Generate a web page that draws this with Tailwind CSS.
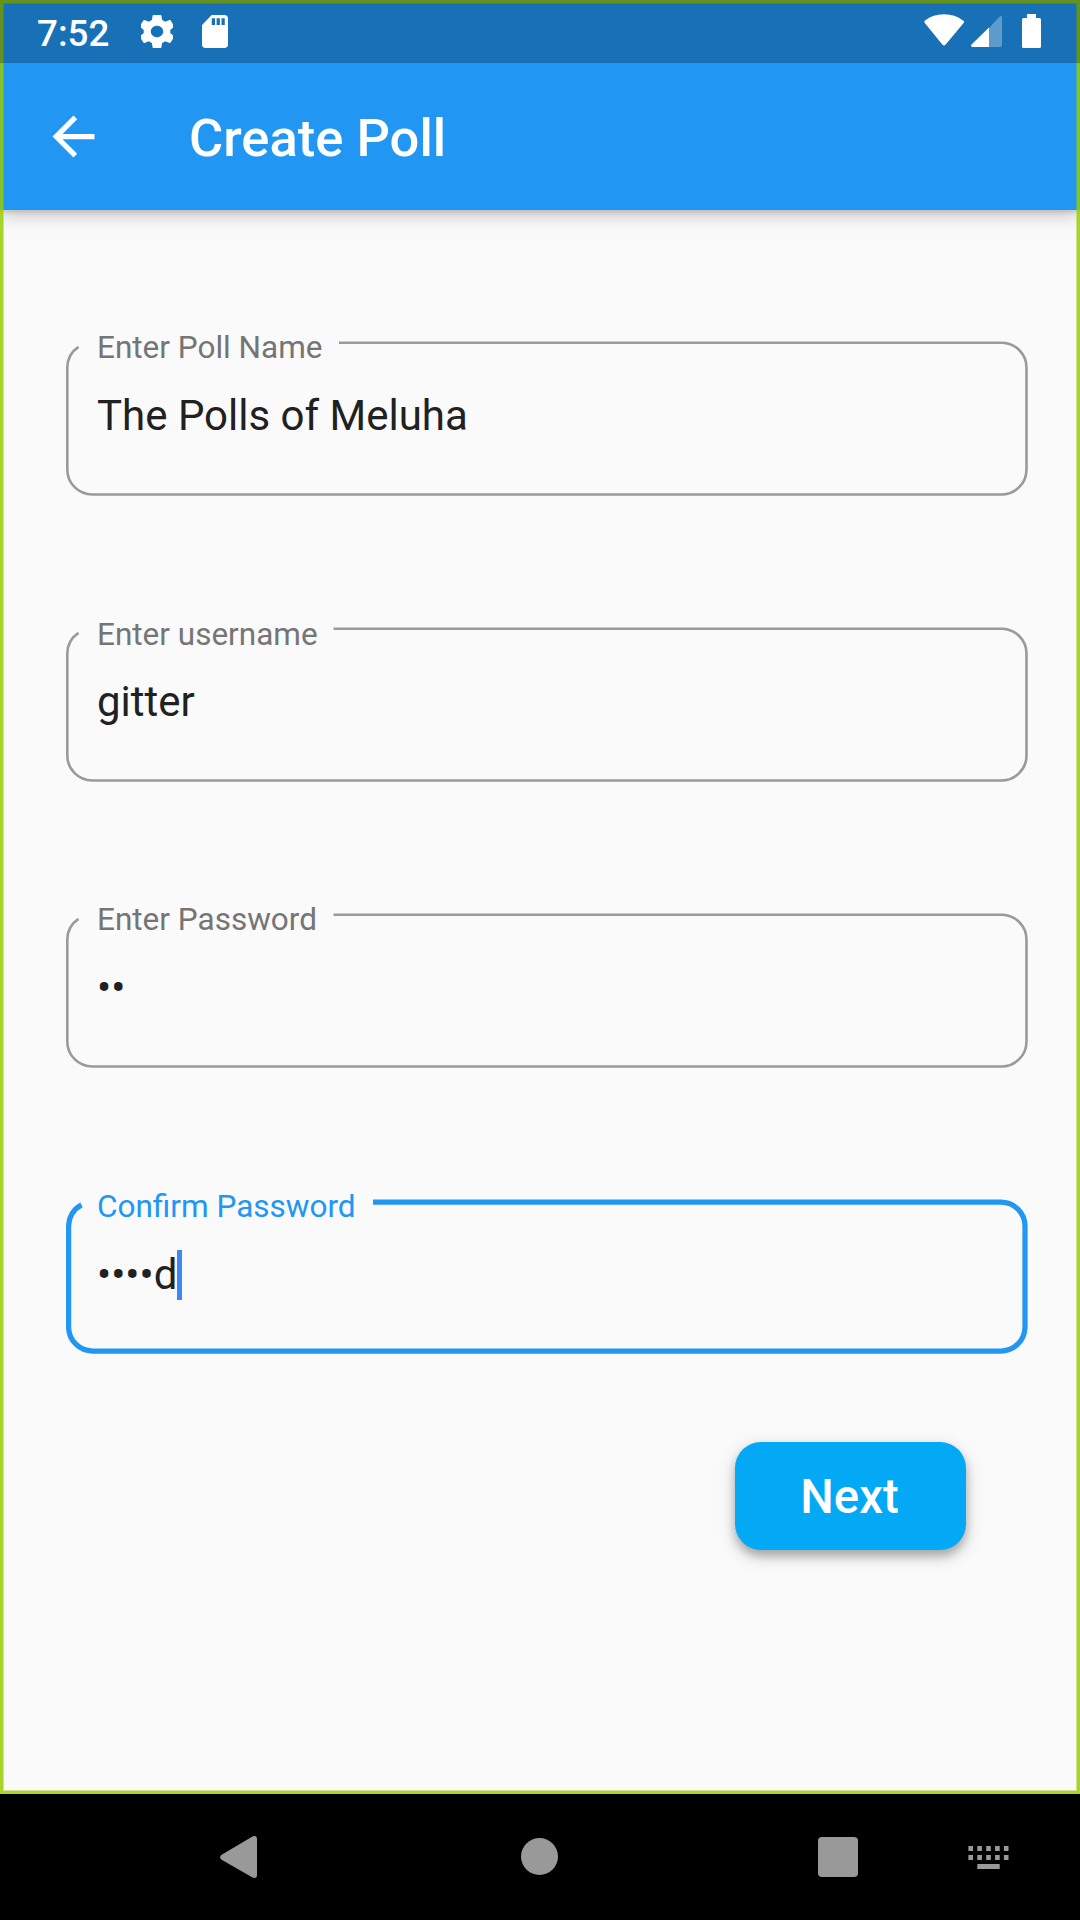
<!DOCTYPE html>
<html lang="en">
<head>
<meta charset="utf-8">
<title>Create Poll</title>
<script src="https://cdn.jsdelivr.net/npm/@tailwindcss/browser@4"></script>
</head>
<body class="bg-black font-['Roboto',sans-serif]">
<div class="flex h-[1920px] w-[1080px] flex-col overflow-hidden">
  <div class="relative flex h-[1794px] flex-col overflow-hidden bg-[#fafafa]">
    <header class="h-[210px] shrink-0 bg-[#2196f3] shadow-[0_2px_5px_rgba(0,0,0,0.12),0_4px_18px_rgba(0,0,0,0.24)]">
      <div class="relative z-20 flex h-[63px] items-center bg-black/25 pr-[39px] pl-[37px] text-white">
        <span class="mt-[5px] w-[104px] text-[36.75px] leading-none font-medium">7:52</span>
        <svg class="h-[33px] w-[32px] shrink-0" viewBox="3 2 18 20" preserveAspectRatio="none" fill="currentColor"><path d="M19.43 12.98c.04-.32.07-.64.07-.98s-.03-.66-.07-.98l2.11-1.65c.19-.15.24-.42.12-.64l-2-3.46c-.12-.22-.39-.3-.61-.22l-2.49 1c-.52-.4-1.08-.73-1.69-.98l-.38-2.65C14.46 2.18 14.25 2 14 2h-4c-.25 0-.46.18-.49.42l-.38 2.65c-.61.25-1.17.59-1.69.98l-2.49-1c-.23-.09-.49 0-.61.22l-2 3.46c-.13.22-.07.49.12.64l2.11 1.65c-.04.32-.07.65-.07.98s.03.66.07.98l-2.11 1.65c-.19.15-.24.42-.12.64l2 3.46c.12.22.39.3.61.22l2.49-1c.52.4 1.08.73 1.69.98l.38 2.65c.03.24.24.42.49.42h4c.25 0 .46-.18.49-.42l.38-2.65c.61-.25 1.17-.59 1.69-.98l2.49 1c.23.09.49 0 .61-.22l2-3.46c.12-.22.07-.49-.12-.64l-2.11-1.65zM12 15.5c-1.93 0-3.5-1.57-3.5-3.5s1.57-3.5 3.5-3.5 3.5 1.57 3.5 3.5-1.57 3.5-3.5 3.5z"/></svg>
        <svg class="ml-[29px] h-[33px] w-[26px] shrink-0" viewBox="4 2 16 20" preserveAspectRatio="none" fill="currentColor"><path d="M18 2h-8L4.020 8 4 20c0 1.100.9 2 2 2h12c1.100 0 2-.9 2-2V4c0-1.100-.9-2-2-2zm-6 6h-2V4h2v4zm3 0h-2V4h2v4zm3 0h-2V4h2v4z"/></svg>
        <div class="mb-px ml-auto flex items-center">
          <svg class="h-[34px] w-[40px]" viewBox="0 0 40 34" fill="currentColor"><path d="M.6 8.800Q-.2 7.400 1 6.400Q9 .2 20 .2T39 6.400Q41 7.400 39.800 8.800L21.500 30.800Q20 32.300 18.500 30.800Z"/></svg>
          <svg class="ml-[7px] h-[34px] w-[31px]" viewBox="0 0 31 34" fill="currentColor"><path fill-opacity=".3" d="M18 14 28.500 2.700Q31 1 31 3.500V31Q31 33 29 33H18Z"/><path d="M18 13.500V33H1.200Q-.3 32.500.3 30.800Z"/></svg>
          <svg class="ml-[20px] h-[34px] w-[19px]" viewBox="0 0 19 34" fill="currentColor"><path d="M5 0h9v4h3.500Q19 4 19 5.500v27Q19 34 17.500 34h-16Q0 34 0 32.500v-27Q0 4 1.500 4H5Z"/></svg>
        </div>
      </div>
      <div class="flex h-[147px] items-center pl-[42px] text-white">
        <svg class="size-[63px]" viewBox="0 0 24 24" fill="currentColor"><path d="M20 11H7.830l5.590-5.590L12 4l-8 8 8 8 1.410-1.410L7.830 13H20v-2z"/></svg>
        <h1 class="mt-[3px] ml-[84px] text-[52.5px] leading-none font-medium">Create Poll</h1>
      </div>
    </header>

    <main class="flex flex-col gap-[131px] pt-[131px] pl-[66px]">
      <label class="relative block h-[155px] w-[962px] pl-[31px]">
        <svg class="absolute inset-0 size-full" viewBox="0 0 962 155" fill="none" stroke="#9a9a9a" stroke-width="2.6"><path d="M273 1.700H935.500a25 25 0 0 1 25 25V128.500a25 25 0 0 1-25 25H26.300a25 25 0 0 1-25-25V26.700A25 25 0 0 1 12.500 5.800"/></svg>
        <span class="block h-[48px] -translate-y-[9px] text-[31.500px] leading-[32px] text-[#757575]">Enter Poll Name</span>
        <span class="block translate-y-[2px] text-[42px] leading-[50px] text-[#212121]">The Polls of Meluha</span>
      </label>
      <label class="relative block h-[155px] w-[962px] pl-[31px]">
        <svg class="absolute inset-0 size-full" viewBox="0 0 962 155" fill="none" stroke="#9a9a9a" stroke-width="2.6"><path d="M267.500 1.700H935.500a25 25 0 0 1 25 25V128.500a25 25 0 0 1-25 25H26.300a25 25 0 0 1-25-25V26.700A25 25 0 0 1 12.500 5.800"/></svg>
        <span class="block h-[48px] -translate-y-[8px] text-[31.500px] leading-[32px] text-[#757575]">Enter username</span>
        <span class="block translate-y-[2px] text-[42px] leading-[50px] text-[#212121]">gitter</span>
      </label>
      <label class="relative block h-[155px] w-[962px] pl-[31px]">
        <svg class="absolute inset-0 size-full" viewBox="0 0 962 155" fill="none" stroke="#9a9a9a" stroke-width="2.6"><path d="M267.500 1.700H935.500a25 25 0 0 1 25 25V128.500a25 25 0 0 1-25 25H26.300a25 25 0 0 1-25-25V26.700A25 25 0 0 1 12.500 5.800"/></svg>
        <span class="block h-[48px] -translate-y-[9px] text-[31.500px] leading-[32px] text-[#757575]">Enter Password</span>
        <span class="block translate-y-[2px] text-[42px] leading-[50px] text-[#212121]">••</span>
      </label>
      <label class="relative block h-[155px] w-[962px] pl-[31px]">
        <svg class="absolute inset-0 size-full" viewBox="0 0 962 155" fill="none" stroke="#2196f3" stroke-width="5.250"><path d="M307 3.200H935a24 24 0 0 1 24 24V128a24 24 0 0 1-24 24H26.600a24 24 0 0 1-24-24V27.200A24 24 0 0 1 15.500 5.800"/></svg>
        <span class="block h-[48px] -translate-y-[8px] text-[31.500px] leading-[32px] text-[#2196f3]">Confirm Password</span>
        <span class="flex translate-y-[3px] text-[42px] leading-[50px] text-[#212121]">••••d<i class="h-[50px] w-[5px] bg-[#4285f4]"></i></span>
      </label>
    </main>
    <button class="mt-[88px] ml-[735px] flex h-[108px] w-[231px] items-center justify-center rounded-[26px] bg-[#03a9f4] pt-[2px] pr-[2px] text-[47.250px] font-medium text-white shadow-[0_6px_8px_rgba(0,0,0,0.2),0_6px_18px_rgba(0,0,0,0.2)]">Next</button>
    <div class="pointer-events-none absolute inset-0 z-10 border-3 border-[#99cc00]/83 shadow-[inset_0_0_0_1px_rgba(153,204,0,0.45)]"></div>
  </div>

  <nav class="flex h-[126px] items-center bg-black text-[#999999]">
    <svg class="ml-[220px] h-[42px] w-[37px]" viewBox="0 0 37 42" fill="currentColor"><path d="M1.200 19 32.500.5Q37-1 37 3V39Q37 43 32.500 41.500L1.200 23.500Q-1 21.300 1.200 19Z"/></svg>
    <span class="mb-px ml-[264px] size-[37px] rounded-full bg-[#999999]"></span>
    <span class="ml-[260px] size-[40px] rounded-[4px] bg-[#999999]"></span>
    <svg class="ml-[110px] h-[23px] w-[41px]" viewBox="0 0 41 23" fill="currentColor"><path d="M.4 0H5v5H.4zM9.300 0h4.600v5H9.300zM18.200 0h4.600v5h-4.600zM27.100 0h4.600v5h-4.600zM35.900 0h4.600v5h-4.600zM.4 9H5v5H.4zM9.300 9h4.600v5H9.300zM18.200 9h4.600v5h-4.600zM27.100 9h4.600v5h-4.600zM35.900 9h4.600v5h-4.600zM9.300 18h22.400v5H9.300z"/></svg>
  </nav>
</div>
</body>
</html>
